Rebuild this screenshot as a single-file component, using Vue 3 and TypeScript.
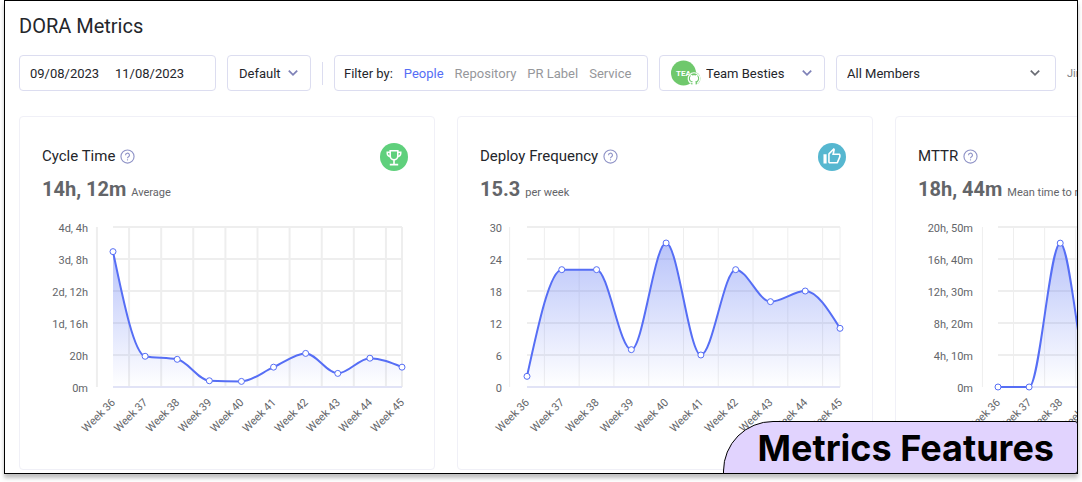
<script setup lang="ts">
import { ref } from 'vue'

interface Metric {
  id: string
  title: string
  value: string
  note: string
  badge: 'trophy' | 'thumb' | null
  ticks: string[]
  max: number
  left: number
  gridWidth: number
  values: number[]
}

const weeks = [36, 37, 38, 39, 40, 41, 42, 43, 44, 45]
const right = 360
const top = 8
const bottom = 168

const metrics: Metric[] = [
  {
    id: 'cycle',
    title: 'Cycle Time',
    value: '14h, 12m',
    note: 'Average',
    badge: 'trophy',
    ticks: ['0m', '20h', '1d, 16h', '2d, 12h', '3d, 8h', '4d, 4h'],
    max: 100,
    left: 71,
    gridWidth: 2,
    values: [84.6, 19.2, 17.3, 3.9, 3.5, 12.4, 21, 8.5, 18, 12.4],
  },
  {
    id: 'deploy',
    title: 'Deploy Frequency',
    value: '15.3',
    note: 'per week',
    badge: 'thumb',
    ticks: ['0', '6', '12', '18', '24', '30'],
    max: 30,
    left: 47,
    gridWidth: 1,
    values: [2, 22, 22, 7, 27, 6, 22, 16, 18, 11],
  },
  {
    id: 'mttr',
    title: 'MTTR',
    value: '18h, 44m',
    note: 'Mean time to recovery',
    badge: null,
    ticks: ['0m', '4h, 10m', '8h, 20m', '12h, 30m', '16h, 40m', '20h, 50m'],
    max: 1250,
    left: 80,
    gridWidth: 1,
    values: [0, 0, 1124, 0, 0, 300, 640, 120, 410, 0],
  },
]

const filters = ['People', 'Repository', 'PR Label', 'Service']
const activeFilter = ref('People')
const startDate = ref('09/08/2023')
const endDate = ref('11/08/2023')

const step = (m: Metric) => (right - m.left) / (weeks.length - 1)
const px = (m: Metric, i: number) => m.left + i * step(m)
const py = (m: Metric, v: number) => bottom - (v / m.max) * (bottom - top)
const tickY = (i: number) => bottom - (i * (bottom - top)) / 5

function gridX(m: Metric): number[] {
  const inner = weeks.map((_, i) => m.left + (i - 0.5) * step(m))
  return [...inner, right]
}

/* Monotone cubic interpolation, so the line never overshoots its points. */
function linePath(m: Metric): string {
  const xs = weeks.map((_, i) => px(m, i))
  const ys = m.values.map((v) => py(m, v))
  const n = xs.length
  const h = step(m)
  const slopes: number[] = []
  for (let i = 0; i < n - 1; i++) slopes.push((ys[i + 1] - ys[i]) / h)
  const t: number[] = new Array(n).fill(0)
  for (let i = 1; i < n - 1; i++) {
    const a = slopes[i - 1]
    const b = slopes[i]
    const p = (a + b) / 2
    t[i] = (Math.sign(a) + Math.sign(b)) * Math.min(Math.abs(a), Math.abs(b), Math.abs(p) / 2) || 0
  }
  t[0] = (3 * slopes[0] - t[1]) / 2
  t[n - 1] = (3 * slopes[n - 2] - t[n - 2]) / 2
  let d = `M${xs[0]},${ys[0]}`
  for (let i = 0; i < n - 1; i++) {
    d += `C${xs[i] + h / 3},${ys[i] + (t[i] * h) / 3},${xs[i + 1] - h / 3},${ys[i + 1] - (t[i + 1] * h) / 3},${xs[i + 1]},${ys[i + 1]}`
  }
  return d
}

const areaPath = (m: Metric) => `${linePath(m)}L${right},${bottom}L${m.left},${bottom}Z`
</script>

<template>
  <main class="frame">
    <div class="content">
      <h1>DORA Metrics</h1>

      <div class="toolbar">
        <div class="box dates">
          <input v-model="startDate" type="text" aria-label="Start date" />
          <input v-model="endDate" type="text" aria-label="End date" />
        </div>

        <div class="box preset">
          <select aria-label="Grouping"><option>Default</option></select>
          <svg class="chevron" viewBox="0 0 10 10"><path d="M1.5 3 5 6.5 8.5 3" /></svg>
        </div>

        <span class="divider"></span>

        <div class="box filter" role="group" aria-label="Filter by">
          <span class="filter-label">Filter by:</span>
          <button
            v-for="f in filters"
            :key="f"
            type="button"
            :class="{ active: f === activeFilter }"
            @click="activeFilter = f"
          >{{ f }}</button>
        </div>

        <div class="box team">
          <svg class="avatar" viewBox="0 0 30 28">
            <circle cx="12.5" cy="14" r="12.5" fill="#6fc86c" />
            <text x="12.5" y="17" text-anchor="middle">TEA</text>
            <circle cx="23" cy="19.5" r="5.5" fill="#fff" />
            <path
              fill="#6fc86c"
              transform="translate(16.6 13.100) scale(0.8)"
              d="M8 0C3.580 0 0 3.580 0 8c0 3.540 2.290 6.530 5.470 7.590.4.070.55-.17.55-.38 0-.19-.01-.82-.01-1.490-2.010.37-2.530-.49-2.690-.94-.09-.23-.48-.94-.82-1.130-.28-.15-.68-.52-.01-.53.63-.01 1.080.58 1.230.82.72 1.210 1.870.87 2.330.66.07-.52.28-.87.51-1.070-1.780-.2-3.640-.89-3.640-3.950 0-.87.31-1.590.82-2.150-.08-.2-.36-1.020.08-2.120 0 0 .67-.21 2.200.82.64-.18 1.320-.27 2-.27s1.360.09 2 .27c1.530-1.040 2.200-.82 2.200-.82.44 1.100.16 1.920.08 2.120.51.56.82 1.270.82 2.150 0 3.070-1.870 3.750-3.650 3.950.29.25.54.73.54 1.480 0 1.070-.01 1.930-.01 2.200 0 .21.15.46.55.38A8.010 8.010 0 0 0 16 8c0-4.420-3.580-8-8-8z"
            />
            <path d="M20 24.500a5.800 5.800 0 1 1 6 0" fill="none" stroke="#fff" stroke-width="1.200" />
          </svg>
          <select aria-label="Team"><option>Team Besties</option></select>
          <svg class="chevron" viewBox="0 0 10 10"><path d="M1.5 3 5 6.5 8.5 3" /></svg>
        </div>

        <div class="box members">
          <select aria-label="Members"><option>All Members</option></select>
          <svg class="chevron dark" viewBox="0 0 10 10"><path d="M1.5 3 5 6.5 8.5 3" /></svg>
        </div>

        <span class="jira">Jira</span>
      </div>

      <div class="cards">
        <section v-for="m in metrics" :key="m.id" class="card">
          <header>
            <div class="heading">
              <h2>{{ m.title }}</h2>
              <button type="button" class="help" :aria-label="'About ' + m.title">
                <svg viewBox="0 0 16 16">
                  <circle cx="8" cy="8" r="7" />
                  <path d="M5.900 6.600a2.100 2.100 0 1 1 3.200 1.700c-.7.450-1.100.7-1.100 1.500" />
                  <path d="M8 11v1.200" />
                </svg>
              </button>
            </div>
            <svg v-if="m.badge === 'trophy'" class="badge" viewBox="0 0 28 28">
              <circle cx="14" cy="14" r="14" fill="#5fd07c" />
              <g fill="none" stroke="#fff" stroke-width="1.600">
                <path d="M10.200 7.800h7.600v5.200a3.800 3.800 0 0 1-7.600 0z" />
                <path d="M10.200 9.200H7.300v1.300a3 3 0 0 0 3.200 3M17.800 9.200h2.900v1.300a3 3 0 0 1-3.200 3M14 16.800v4.800M9.800 21.600h8.400" />
              </g>
            </svg>
            <svg v-else-if="m.badge === 'thumb'" class="badge" viewBox="0 0 28 28">
              <circle cx="14" cy="14" r="14" fill="#56b7d0" />
              <path
                fill="#fff"
                transform="translate(4.700 4.200) scale(0.780)"
                d="M9 21h9c.83 0 1.540-.5 1.840-1.220l3.020-7.050c.09-.23.14-.47.14-.73v-2c0-1.100-.9-2-2-2h-6.310l.95-4.570.03-.32c0-.41-.17-.79-.44-1.060L14.170 1 7.580 7.590C7.220 7.950 7 8.450 7 9v10c0 1.100.9 2 2 2zM9 9l4.340-4.340L12 10h9v2l-3 7H9V9zM1 9h4v12H1z"
              />
            </svg>
          </header>

          <p class="summary"><strong>{{ m.value }}</strong><span>{{ m.note }}</span></p>

          <svg class="chart" viewBox="0 0 370 230" role="img" :aria-label="m.title + ' by week'">
            <defs>
              <linearGradient :id="'fill-' + m.id" x1="0" y1="0" x2="0" y2="1">
                <stop offset="0" stop-color="#4f6af2" stop-opacity="0.4" />
                <stop offset="1" stop-color="#4f6af2" stop-opacity="0" />
              </linearGradient>
            </defs>
            <g stroke="#eeeeee" :stroke-width="m.gridWidth">
              <line v-for="(x, i) in gridX(m)" :key="'v' + i" :x1="x" :x2="x" :y1="top" :y2="bottom" />
            </g>
            <g stroke="#eeeeee" stroke-width="2">
              <line v-for="(t, i) in m.ticks" :key="'h' + i" :x1="m.left" :x2="right" :y1="tickY(i)" :y2="tickY(i)" />
            </g>
            <line :x1="m.left" :x2="right" :y1="bottom" :y2="bottom" stroke="#e1e3f6" stroke-width="2" />
            <path :d="areaPath(m)" :fill="`url(#fill-${m.id})`" />
            <path :d="linePath(m)" fill="none" stroke="#566ef5" stroke-width="2" />
            <circle
              v-for="(v, i) in m.values"
              :key="'p' + i"
              :cx="px(m, i)"
              :cy="py(m, v)"
              r="3"
              fill="#fff"
              stroke="#566ef5"
              stroke-width="1"
            />
            <g class="tick" text-anchor="end">
              <text v-for="(t, i) in m.ticks" :key="'t' + i" :x="m.left - 25" :y="tickY(i) + 5">{{ t }}</text>
              <text
                v-for="(w, i) in weeks"
                :key="'w' + i"
                :transform="`translate(${px(m, i) + 3} ${bottom + 16}) rotate(-45)`"
              >Week {{ w }}</text>
            </g>
          </svg>
        </section>
      </div>
    </div>

    <div class="caption">Metrics Features</div>
  </main>
</template>

<style>
body {
  margin: 0;
  background: #fff;
}
</style>

<style scoped>
.frame {
  position: relative;
  margin: 0 4px 8px;
  border: 1px solid #000;
  background: #fff;
  box-shadow: 0 4px 4px rgba(0, 0, 0, 0.25);
  font-family: Roboto, 'Liberation Sans', sans-serif;
  color: #24262b;
}

.content {
  overflow: hidden;
  padding: 13px 0 3px 14px;
}

h1 {
  margin: 0;
  font-size: 20px;
  line-height: 24px;
  font-weight: 400;
}

.toolbar {
  display: flex;
  align-items: center;
  gap: 11px;
  margin-top: 17px;
  font-size: 13px;
}

.box {
  box-sizing: border-box;
  flex: none;
  display: flex;
  align-items: center;
  height: 36px;
  padding: 0 11px;
  border: 1px solid #dcddf0;
  border-radius: 4px;
  background: #fff;
  white-space: nowrap;
}

input,
select,
button {
  appearance: none;
  margin: 0;
  padding: 0;
  border: 0;
  background: none;
  color: inherit;
  font: inherit;
  outline: none;
}

.dates {
  width: 197px;
  padding: 0 10px;
  gap: 9px;
}

.dates input {
  width: 76px;
}

.preset {
  width: 84px;
}

.preset select,
.team select,
.members select {
  flex: 1;
  min-width: 0;
}

.chevron {
  flex: none;
  width: 12px;
  height: 12px;
  fill: none;
  stroke: #7f82b8;
  stroke-width: 1.5;
}

.chevron.dark {
  margin-right: 2px;
  stroke: #6b6d75;
}

.divider {
  flex: none;
  width: 1px;
  height: 23px;
  background: #dcddf0;
}

.filter {
  width: 314px;
  padding: 0 9px;
  gap: 11px;
}

.filter button {
  color: #96979b;
}

.filter button.active {
  color: #566ef5;
}

.team {
  width: 166px;
}

.avatar {
  flex: none;
  width: 30px;
  height: 28px;
  margin-right: 5px;
}

.avatar text {
  fill: #fff;
  font-size: 8px;
  font-weight: 700;
}

.members {
  width: 220px;
  padding: 0 12px 0 10px;
}

.jira {
  flex: none;
  color: #7d7e82;
  font-size: 11px;
}

.cards {
  display: flex;
  gap: 22px;
  margin-top: 25px;
}

.card {
  box-sizing: border-box;
  flex: 0 0 416px;
  padding: 22px 22px 20px;
  border: 1px solid #f0f0f7;
  border-radius: 4px;
}

header {
  display: flex;
  justify-content: space-between;
  height: 34px;
  padding-right: 4px;
}

.heading {
  display: flex;
  align-items: center;
  gap: 5px;
  height: 34px;
}

h2 {
  margin: 0;
  font-size: 15px;
  line-height: 24px;
  font-weight: 400;
}

.help {
  display: flex;
}

.help svg {
  width: 15px;
  height: 15px;
  fill: none;
  stroke: #8f93c7;
  stroke-width: 1.2;
}

.badge {
  width: 28px;
  height: 28px;
  margin-top: 4px;
}

.summary {
  display: flex;
  align-items: baseline;
  gap: 5px;
  margin: 4px 0 0;
  color: #636569;
  font-size: 11px;
  line-height: 24px;
  white-space: nowrap;
}

.summary strong {
  font-size: 20px;
  font-weight: 700;
}

.chart {
  display: block;
  width: 100%;
  margin-top: 14px;
}

.tick {
  fill: #636569;
  font-size: 11px;
}

.caption {
  position: absolute;
  right: -1px;
  bottom: -1px;
  box-sizing: border-box;
  padding: 5px 23px 3px 34px;
  border: 1px solid #000;
  border-radius: 50px 3px 3px 0;
  background: #e1d3fe;
  color: #000;
  font-family: Inter, 'Liberation Sans', sans-serif;
  font-size: 36px;
  line-height: 43px;
  font-weight: 700;
  white-space: nowrap;
}
</style>
